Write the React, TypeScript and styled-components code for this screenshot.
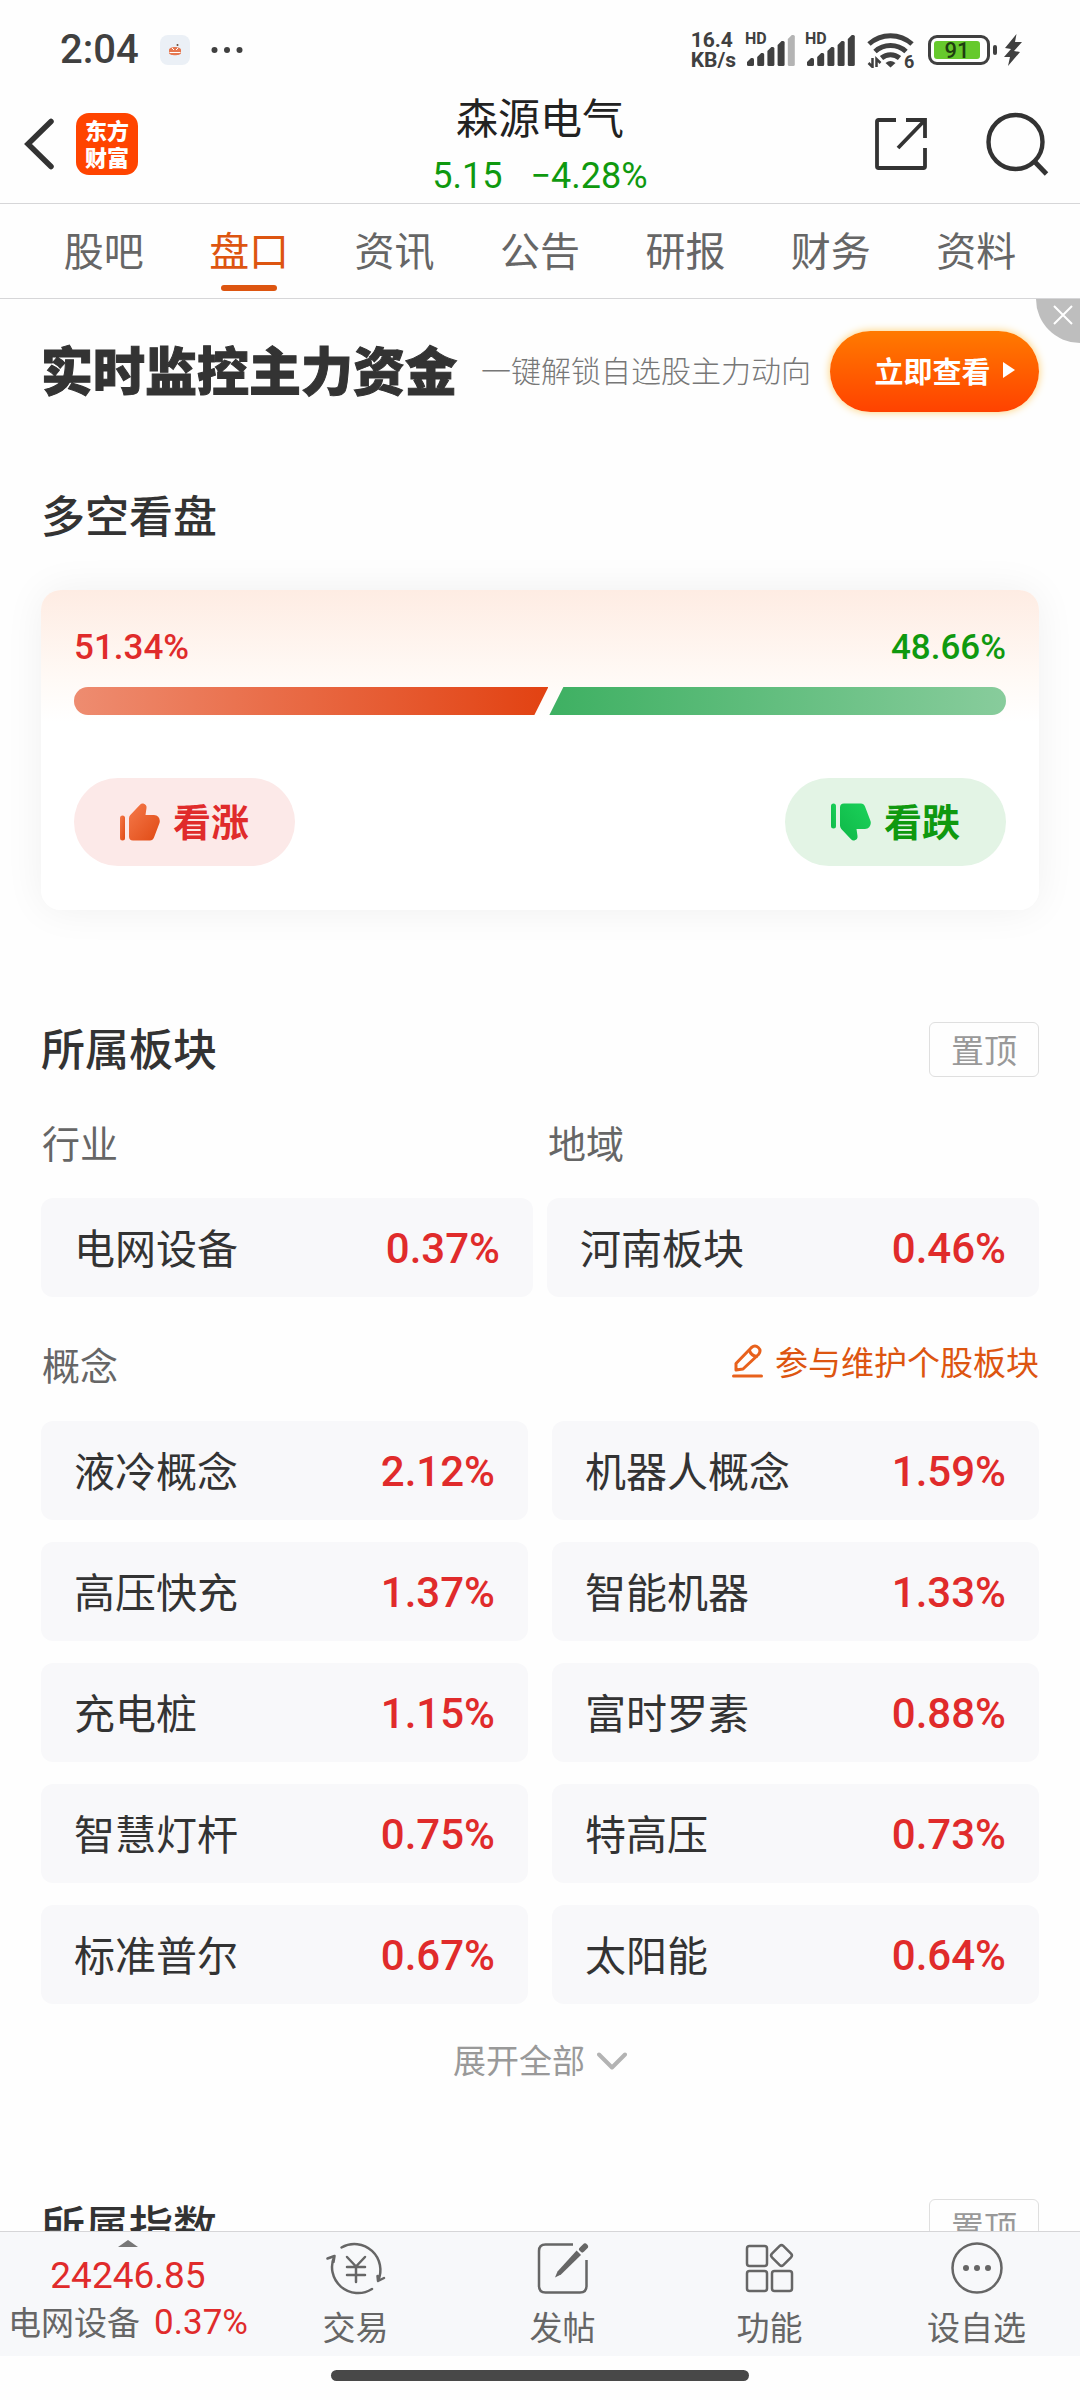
import React from "react";
import styled, { createGlobalStyle, css } from "styled-components";

const cjk = '"Noto Sans CJK SC", "Noto Sans", sans-serif';
const latin = 'Roboto, "Noto Sans CJK SC", sans-serif';

const color = {
  ink: "#333333",
  mid: "#666666",
  faint: "#999999",
  rise: "#e02b2b",
  fall: "#0f990f",
  brand: "#dd5510",
  tile: "#f8f8fa",
  line: "#d6d6d8",
};

const GlobalStyle = createGlobalStyle`
  *, *::before, *::after { box-sizing: border-box; }
  body { margin: 0; background: #fefefe; color: ${color.ink}; font-family: ${cjk}; }
  h1, h2, h3, p { margin: 0; font-weight: 400; }
  button { margin: 0; padding: 0; border: 0; background: none; color: inherit; font: inherit; cursor: pointer; }
  a { color: inherit; text-decoration: none; }
  svg { display: block; flex: none; }
`;

const Screen = styled.div`
  display: flex;
  flex-direction: column;
  height: 100vh;
`;

const StatusBar = styled.div`
  flex: none;
  display: flex;
  align-items: center;
  justify-content: space-between;
  height: 82px;
  padding: 18px 57px 0 60px;
  color: #404040;
  font-family: ${latin};
`;

const StatusGroup = styled.div<{ $gap: number }>`
  display: flex;
  align-items: center;
  gap: ${(p) => p.$gap}px;
`;

const Clock = styled.span`
  font-size: 40px;
  font-weight: 500;
  line-height: 44px;
`;

const NetSpeed = styled.span`
  font-size: 21px;
  font-weight: 700;
  line-height: 20px;
`;

const SignalBox = styled.span`
  position: relative;
  display: block;
`;

const HdMark = styled.span`
  position: absolute;
  left: -2px;
  top: -3px;
  font-size: 16px;
  font-weight: 700;
  line-height: 16px;
`;

const BatteryBody = styled.span`
  display: flex;
  align-items: center;
  width: 62px;
  height: 30px;
  padding: 0 3px;
  border: 3px solid #404040;
  border-radius: 9px;
`;

const BatteryFill = styled.span`
  width: 46px;
  height: 18px;
  border-radius: 3px;
  background: #66c92c;
  color: #1f3d10;
  font-size: 22px;
  font-weight: 500;
  line-height: 20px;
  text-align: center;
`;

const BatteryTip = styled.span`
  width: 4px;
  height: 10px;
  border-radius: 2px;
  background: #404040;
`;

const Header = styled.header`
  flex: none;
  display: grid;
  grid-template-columns: 1fr auto 1fr;
  align-items: center;
  height: 122px;
  border-bottom: 1px solid ${color.line};
`;

const HeaderSide = styled.div<{ $end?: boolean }>`
  display: flex;
  align-items: center;
  gap: 22px;
  padding: 0 0 2px 24px;
  ${(p) =>
    p.$end &&
    css`
      justify-content: flex-end;
      gap: 58px;
      padding: 0 31px 2px 0;
    `}
`;

const Logo = styled.a`
  display: flex;
  flex-direction: column;
  align-items: center;
  justify-content: center;
  width: 62px;
  height: 62px;
  padding-bottom: 2px;
  border-radius: 13px;
  background: #ff4400;
  color: #ffffff;
  font-size: 22px;
  font-weight: 900;
  line-height: 27px;
`;

const StockTitle = styled.div`
  align-self: start;
  padding-top: 6px;
  text-align: center;
`;

const StockName = styled.h1`
  color: #222222;
  font-size: 42px;
  line-height: 56px;
`;

const Quote = styled.p`
  display: flex;
  justify-content: center;
  gap: 28px;
  color: ${color.fall};
  font-family: ${latin};
  font-size: 36px;
  line-height: 64px;
`;

const TabBar = styled.nav`
  flex: none;
  display: flex;
  height: 95px;
  padding: 0 31px;
  border-bottom: 1px solid ${color.line};
`;

const Tab = styled.a<{ $active?: boolean }>`
  position: relative;
  flex: 1;
  color: ${(p) => (p.$active ? color.brand : color.mid)};
  font-size: 40px;
  line-height: 90px;
  text-align: center;
  &::after {
    content: "";
    display: ${(p) => (p.$active ? "block" : "none")};
    position: absolute;
    left: 50%;
    bottom: 7px;
    width: 56px;
    height: 6px;
    margin-left: -28px;
    border-radius: 3px;
    background: ${color.brand};
  }
`;

const Content = styled.main`
  flex: 1;
  min-height: 0;
  overflow-y: auto;
  scrollbar-width: none;
`;

const Banner = styled.section`
  position: relative;
  display: flex;
  align-items: center;
  height: 144px;
  padding: 0 41px;
`;

const BannerTitle = styled.h2`
  padding-bottom: 4px;
  font-size: 52px;
  font-weight: 900;
  line-height: 60px;
  white-space: nowrap;
  -webkit-text-stroke: 1px ${color.ink};
`;

const BannerText = styled.p`
  margin-left: 24px;
  padding-bottom: 4px;
  color: #777777;
  font-size: 30px;
  font-weight: 300;
  line-height: 40px;
  white-space: nowrap;
`;

const BannerAction = styled.button`
  display: flex;
  align-items: center;
  justify-content: center;
  gap: 12px;
  width: 209px;
  height: 81px;
  margin-left: auto;
  padding: 0 0 2px 20px;
  border-radius: 41px;
  background: linear-gradient(#ff7a00, #ff4200);
  box-shadow: 0 0 8px #ffcf70;
  color: #ffffff;
  font-size: 29px;
  font-weight: 700;
  line-height: 36px;
`;

const BannerClose = styled.button`
  position: absolute;
  top: 0;
  right: 0;
  display: flex;
  align-items: center;
  justify-content: center;
  width: 44px;
  height: 44px;
  padding: 0 0 12px 10px;
  border-bottom-left-radius: 44px;
  background: #bebebe;
`;

const Section = styled.section<{ $top: number }>`
  padding: ${(p) => p.$top}px 41px 0;
`;

const SectionHead = styled.div`
  display: flex;
  align-items: center;
  justify-content: space-between;
  min-height: 55px;
`;

const SectionTitle = styled.h2`
  padding-bottom: 6px;
  font-size: 44px;
  font-weight: 500;
  line-height: 48px;
`;

const PinButton = styled.button`
  width: 110px;
  height: 55px;
  padding-bottom: 2px;
  border: 1px solid #dfdfdf;
  border-radius: 6px;
  color: ${color.faint};
  font-size: 33px;
  line-height: 48px;
`;

const VoteCard = styled.div`
  margin-top: 46px;
  padding: 38px 33px 44px;
  border-radius: 20px;
  background: linear-gradient(#feece3, #fffaf6 90px, #ffffff 132px);
  box-shadow: 0 0 40px rgba(0, 0, 0, 0.06);
`;

const Spread = styled.div`
  display: flex;
  align-items: center;
  justify-content: space-between;
`;

const Share = styled.span<{ $tone: string }>`
  color: ${(p) => p.$tone};
  font-family: ${latin};
  font-size: 35px;
  font-weight: 500;
  line-height: 40px;
`;

const Meter = styled.div`
  display: flex;
  gap: 1px;
  height: 28px;
  margin: 19px 0 63px;
`;

const MeterRise = styled.div`
  border-radius: 14px 0 0 14px;
  background: linear-gradient(90deg, #ee8c70, #e24212);
  clip-path: polygon(0 0, 100% 0, calc(100% - 14px) 100%, 0 100%);
`;

const MeterFall = styled.div`
  flex-basis: 7px;
  border-radius: 0 14px 14px 0;
  background: linear-gradient(90deg, #3eb062, #88cc9c);
  clip-path: polygon(14px 0, 100% 0, 100% 100%, 0 100%);
`;

const VoteButton = styled.button<{ $fall?: boolean }>`
  display: flex;
  align-items: center;
  justify-content: center;
  gap: 13px;
  width: 221px;
  height: 88px;
  border-radius: 44px;
  background: ${(p) => (p.$fall ? "#e3f4e5" : "#fce9e8")};
  color: ${(p) => (p.$fall ? color.fall : color.rise)};
  font-size: 38px;
  font-weight: 700;
  line-height: 48px;
`;

const VoteLabel = styled.span`
  padding-bottom: 4px;
`;

const Pair = styled.div<{ $gap: number; $top: number }>`
  display: grid;
  grid-template-columns: 1fr 1fr;
  gap: 22px ${(p) => p.$gap}px;
  margin-top: ${(p) => p.$top}px;
`;

const GroupLabel = styled.h3`
  padding-left: 1px;
  color: ${color.mid};
  font-size: 38px;
  line-height: 54px;
`;

const Tile = styled.a`
  display: flex;
  align-items: center;
  justify-content: space-between;
  height: 99px;
  padding: 0 33px;
  border-radius: 12px;
  background: ${color.tile};
`;

const TileName = styled.span`
  padding-bottom: 4px;
  font-size: 41px;
  line-height: 52px;
`;

const TileValue = styled.span`
  padding-top: 2px;
  color: ${color.rise};
  font-family: ${latin};
  font-size: 42px;
  font-weight: 500;
  line-height: 52px;
`;

const ConceptHead = styled(Spread)`
  margin-top: 40px;
`;

const EditLink = styled.a`
  display: flex;
  align-items: center;
  gap: 12px;
  padding-bottom: 6px;
  color: ${color.brand};
  font-size: 33px;
  line-height: 48px;
`;

const ExpandButton = styled.button`
  display: flex;
  align-items: center;
  justify-content: center;
  gap: 12px;
  width: 100%;
  height: 56px;
  margin-top: 29px;
  color: ${color.faint};
  font-size: 33px;
  line-height: 48px;
`;

const ExpandLabel = styled.span`
  padding-bottom: 4px;
`;

const BottomBar = styled.nav`
  flex: none;
  display: grid;
  grid-template-columns: 28fr repeat(4, 23fr);
  height: 125px;
  border-top: 1px solid ${color.line};
  background: #f7f8fa;
`;

const BottomItem = styled.button`
  display: flex;
  flex-direction: column;
  align-items: center;
  gap: 11px;
  min-width: 0;
  padding-top: 9px;
  color: ${color.mid};
  font-size: 33px;
  line-height: 40px;
`;

const IndexItem = styled(BottomItem)`
  gap: 9px;
  padding: 8px 0 0 4px;
  color: ${color.rise};
  font-family: ${latin};
`;

const IndexPoint = styled.span`
  font-size: 37px;
  line-height: 40px;
`;

const IndexRow = styled.span`
  display: flex;
  align-items: center;
  gap: 14px;
  line-height: 32px;
  white-space: nowrap;
`;

const IndexName = styled.span`
  padding-bottom: 4px;
  color: ${color.mid};
  font-family: ${cjk};
`;

const IndexRate = styled.span`
  font-size: 35px;
`;

const HomeArea = styled.div`
  flex: none;
  display: flex;
  justify-content: center;
  height: 44px;
  padding-top: 14px;
`;

const HomeIndicator = styled.div`
  width: 418px;
  max-width: 60%;
  height: 11px;
  border-radius: 6px;
  background: #484848;
`;

function NoticeIcon() {
  return (
    <svg width="30" height="31" viewBox="0 0 30 31">
      <rect width="30" height="30" rx="8" fill="#ebf0f6" />
      <path d="M9 15c0-4 12-4 12 0v3c0 3-12 3-12 0z" fill="#e5774f" />
      <path d="M9.500 17.500h11M12 13l2 2M18 13l-2 2" stroke="#fff" strokeWidth="1" />
      <circle cx="17.500" cy="10" r="1" fill="#6b4a3a" />
    </svg>
  );
}

function MoreDots() {
  return (
    <svg width="32" height="8" viewBox="0 0 32 8" fill="#404040">
      <circle cx="3.500" cy="4" r="3" />
      <circle cx="16" cy="4" r="3" />
      <circle cx="28.500" cy="4" r="3" />
    </svg>
  );
}

function Signal({ level }: { level: number }) {
  return (
    <SignalBox>
      <HdMark>HD</HdMark>
      <svg width="49" height="32" viewBox="0 0 49 32">
        {[8, 13, 19, 25, 31].map((h, i) => (
          <path
            key={h}
            d={`M${i * 10.2} ${32 - h + 4}l4-4h1.500q1.500 0 1.500 1.500V30.500q0 1.500-1.500 1.500h-4q-1.500 0-1.500-1.500z`}
            fill={i < level ? "#404040" : "#b4b4b4"}
          />
        ))}
      </svg>
    </SignalBox>
  );
}

function WifiIcon() {
  return (
    <svg width="50" height="36" viewBox="0 0 50 36" fill="none" stroke="#404040">
      <path d="M2 12a32 32 0 0 1 43 0" strokeWidth="5" />
      <path d="M8 19.500a23 23 0 0 1 31 0" strokeWidth="5" />
      <path d="M14.500 26a14 14 0 0 1 18 0" strokeWidth="5" />
      <path d="M18.500 31q5-4 10 0l-5 4.500z" fill="#404040" stroke="none" />
      <path d="M5.500 26v9l-4-4M9.500 35v-8l4 4" strokeWidth="2.500" />
      <text x="37" y="35.500" fontFamily="Roboto, sans-serif" fontSize="18" fontWeight="700" fill="#404040" stroke="none">
        6
      </text>
    </svg>
  );
}

function BoltIcon() {
  return (
    <svg width="20" height="32" viewBox="0 0 20 32" fill="#404040">
      <path d="M13.500 0 2 14l6 1-7 8h6l-2 9L17 18l-6-1 8-9h-7z" />
    </svg>
  );
}

function BackIcon() {
  return (
    <svg width="30" height="52" viewBox="0 0 30 52" fill="none" stroke="#333" strokeWidth="5.500" strokeLinecap="round">
      <path d="M27 3.500 4 26l23 22.500" />
    </svg>
  );
}

function ShareIcon() {
  return (
    <svg width="54" height="54" viewBox="0 0 54 54" fill="none" stroke="#333" strokeWidth="3.800">
      <path d="M22 3H4.500Q3 3 3 4.500v45Q3 51 4.500 51h45q1.500 0 1.500-1.500V31" />
      <path d="M32 3h19v18M51 3 24 31" />
    </svg>
  );
}

function SearchIcon() {
  return (
    <svg width="63" height="64" viewBox="0 0 63 64" fill="none" stroke="#333" strokeWidth="4.400">
      <circle cx="29.500" cy="30" r="27" />
      <path d="M48.500 49.500 60.500 62" strokeWidth="4.800" />
    </svg>
  );
}

function CloseIcon() {
  return (
    <svg width="20" height="20" viewBox="0 0 20 20" stroke="#fff" strokeWidth="2">
      <path d="M1 1l18 18M19 1 1 19" />
    </svg>
  );
}

function Thumb({ id, from, to, down }: { id: string; from: string; to: string; down?: boolean }) {
  return (
    <svg width="40" height="38" viewBox="0 0 40 38">
      <defs>
        <linearGradient id={id} x1="0" y1="0" x2="1" y2="1">
          <stop offset="0" stopColor={from} />
          <stop offset="1" stopColor={to} />
        </linearGradient>
      </defs>
      <g fill={`url(#${id})`} transform={down ? "matrix(1 0 0 -1 0 38)" : undefined}>
        <rect x="0" y="12.500" width="5" height="25" rx="2.500" />
        <path d="M9 15.500q0-2 1.300-3.400L20 1.700q1.500-1.600 3.300-1.200Q27 1.500 26.500 5l-1 7H34q5.500.500 5.800 6 0 1.200-.400 2.300L34 34.500q-1.200 3-4 3H13q-4 0-4-4z" />
      </g>
    </svg>
  );
}

function EditIcon() {
  return (
    <svg width="31" height="34" viewBox="0 0 31 34" fill="none" stroke="#e8611c" strokeWidth="3" strokeLinejoin="round" strokeLinecap="round">
      <path d="M4 26V19.500L19.500 3.500q3.500-3 6.800 0t.2 7L11 25z" />
      <path d="M17.500 6.500q1.500 5 7 6" />
      <path d="M1.500 32h28" />
    </svg>
  );
}

function ChevronIcon() {
  return (
    <svg width="30" height="18" viewBox="0 0 30 18" fill="none" stroke="#b3b3b3" strokeWidth="4" strokeLinecap="round" strokeLinejoin="round">
      <path d="M2 2.500 15 15.500 28 2.500" />
    </svg>
  );
}

function TradeIcon() {
  return (
    <svg width="60" height="54" viewBox="0 0 60 54" fill="none" stroke="#666" strokeWidth="2.500" strokeLinejoin="round" strokeLinecap="round">
      <path d="M15.500 6.500A26 26 0 0 1 52 40l-.500-5M52 40l6-3" />
      <path d="M46 48A26 26 0 0 1 8.500 15M1.500 17.500l7-2.500-1 6" />
      <path d="M21 16l9 9.500L39 16M30 25.500V41M21 26h18M21 34h18" />
    </svg>
  );
}

function PostIcon() {
  return (
    <svg width="54" height="54" viewBox="0 0 54 54" fill="none" stroke="#666" strokeWidth="2.500">
      <path d="M37 3.500H9.500Q3 3.500 3 10v35q0 6.500 6.500 6.500H44q6.500 0 6.500-6.500V19" />
      <path d="M41.500 8.500 46 13 25 33.500l-6 3 2.500-6z" fill="#666" stroke="none" />
      <path d="M46 8.500 49 5.500" strokeWidth="6" strokeLinecap="round" />
      <path d="M40 7.500 47 14.500" stroke="#f7f8fa" strokeWidth="2" />
    </svg>
  );
}

function FeatureIcon() {
  return (
    <svg width="54" height="54" viewBox="0 0 54 54" fill="none" stroke="#666" strokeWidth="2.500">
      <rect x="4" y="5" width="20" height="20" rx="2.500" />
      <rect x="4" y="30" width="20" height="20" rx="2.500" />
      <rect x="29" y="30" width="20" height="20" rx="2.500" />
      <rect x="30.500" y="6.500" width="16" height="16" rx="2.500" transform="rotate(45 38.500 14.500)" />
    </svg>
  );
}

function MoreIcon() {
  return (
    <svg width="54" height="54" viewBox="0 0 54 54" fill="none" stroke="#666" strokeWidth="2.500">
      <circle cx="27" cy="27" r="24.500" />
      <g fill="#666" stroke="none">
        <circle cx="16" cy="27" r="3" />
        <circle cx="27" cy="27" r="3" />
        <circle cx="38" cy="27" r="3" />
      </g>
    </svg>
  );
}

const tabs = ["股吧", "盘口", "资讯", "公告", "研报", "财务", "资料"];

const concepts: [string, string][] = [
  ["液冷概念", "2.12%"],
  ["机器人概念", "1.59%"],
  ["高压快充", "1.37%"],
  ["智能机器", "1.33%"],
  ["充电桩", "1.15%"],
  ["富时罗素", "0.88%"],
  ["智慧灯杆", "0.75%"],
  ["特高压", "0.73%"],
  ["标准普尔", "0.67%"],
  ["太阳能", "0.64%"],
];

const actions = [
  { label: "交易", icon: <TradeIcon /> },
  { label: "发帖", icon: <PostIcon /> },
  { label: "功能", icon: <FeatureIcon /> },
  { label: "设自选", icon: <MoreIcon /> },
];

const votes = { rise: 51.34, fall: 48.66 };

function BoardTile({ name, value }: { name: string; value: string }) {
  return (
    <Tile href="#">
      <TileName>{name}</TileName>
      <TileValue>{value}</TileValue>
    </Tile>
  );
}

export default function App() {
  return (
    <Screen>
      <GlobalStyle />
      <StatusBar>
        <StatusGroup $gap={21}>
          <Clock>2:04</Clock>
          <NoticeIcon />
          <MoreDots />
        </StatusGroup>
        <StatusGroup $gap={11}>
          <NetSpeed>
            16.4
            <br />
            KB/s
          </NetSpeed>
          <Signal level={4} />
          <Signal level={5} />
          <WifiIcon />
          <StatusGroup $gap={6}>
            <StatusGroup $gap={3}>
              <BatteryBody>
                <BatteryFill>91</BatteryFill>
              </BatteryBody>
              <BatteryTip />
            </StatusGroup>
            <BoltIcon />
          </StatusGroup>
        </StatusGroup>
      </StatusBar>

      <Header>
        <HeaderSide>
          <button type="button" aria-label="返回">
            <BackIcon />
          </button>
          <Logo href="#">
            <span>东方</span>
            <span>财富</span>
          </Logo>
        </HeaderSide>
        <StockTitle>
          <StockName>森源电气</StockName>
          <Quote>
            <span>5.15</span>
            <span>−4.28%</span>
          </Quote>
        </StockTitle>
        <HeaderSide $end>
          <button type="button" aria-label="分享">
            <ShareIcon />
          </button>
          <button type="button" aria-label="搜索">
            <SearchIcon />
          </button>
        </HeaderSide>
      </Header>

      <TabBar>
        {tabs.map((t) => (
          <Tab key={t} href="#" $active={t === "盘口"}>
            {t}
          </Tab>
        ))}
      </TabBar>

      <Content>
        <Banner>
          <BannerTitle>实时监控主力资金</BannerTitle>
          <BannerText>一键解锁自选股主力动向</BannerText>
          <BannerAction type="button">
            立即查看
            <svg width="12" height="16" viewBox="0 0 12 16" fill="#fff">
              <path d="M0 0l12 8-12 8z" />
            </svg>
          </BannerAction>
          <BannerClose type="button" aria-label="关闭">
            <CloseIcon />
          </BannerClose>
        </Banner>

        <Section $top={46}>
          <SectionHead>
            <SectionTitle>多空看盘</SectionTitle>
          </SectionHead>
          <VoteCard>
            <Spread>
              <Share $tone={color.rise}>{votes.rise}%</Share>
              <Share $tone={color.fall}>{votes.fall}%</Share>
            </Spread>
            <Meter>
              <MeterRise style={{ flexGrow: votes.rise }} />
              <MeterFall style={{ flexGrow: votes.fall }} />
            </Meter>
            <Spread>
              <VoteButton type="button">
                <Thumb id="thumb-rise" from="#f5794a" to="#e04a14" />
                <VoteLabel>看涨</VoteLabel>
              </VoteButton>
              <VoteButton type="button" $fall>
                <Thumb id="thumb-fall" from="#0fb848" to="#1bd25a" down />
                <VoteLabel>看跌</VoteLabel>
              </VoteButton>
            </Spread>
          </VoteCard>
        </Section>

        <Section $top={112}>
          <SectionHead>
            <SectionTitle>所属板块</SectionTitle>
            <PinButton type="button">置顶</PinButton>
          </SectionHead>
          <Pair $gap={14} $top={38}>
            <GroupLabel>行业</GroupLabel>
            <GroupLabel>地域</GroupLabel>
          </Pair>
          <Pair $gap={14} $top={29}>
            <BoardTile name="电网设备" value="0.37%" />
            <BoardTile name="河南板块" value="0.46%" />
          </Pair>
          <ConceptHead>
            <GroupLabel>概念</GroupLabel>
            <EditLink href="#">
              <EditIcon />
              参与维护个股板块
            </EditLink>
          </ConceptHead>
          <Pair $gap={24} $top={30}>
            {concepts.map(([name, value]) => (
              <BoardTile key={name} name={name} value={value} />
            ))}
          </Pair>
          <ExpandButton type="button">
            <ExpandLabel>展开全部</ExpandLabel>
            <ChevronIcon />
          </ExpandButton>
        </Section>

        <Section $top={110}>
          <SectionHead>
            <SectionTitle>所属指数</SectionTitle>
            <PinButton type="button">置顶</PinButton>
          </SectionHead>
        </Section>
      </Content>

      <BottomBar>
        <IndexItem type="button">
          <svg width="20" height="7" viewBox="0 0 20 7" fill="#777">
            <path d="M0 7 10 0l10 7z" />
          </svg>
          <IndexPoint>24246.85</IndexPoint>
          <IndexRow>
            <IndexName>电网设备</IndexName>
            <IndexRate>0.37%</IndexRate>
          </IndexRow>
        </IndexItem>
        {actions.map((a) => (
          <BottomItem key={a.label} type="button">
            {a.icon}
            {a.label}
          </BottomItem>
        ))}
      </BottomBar>
      <HomeArea>
        <HomeIndicator />
      </HomeArea>
    </Screen>
  );
}
